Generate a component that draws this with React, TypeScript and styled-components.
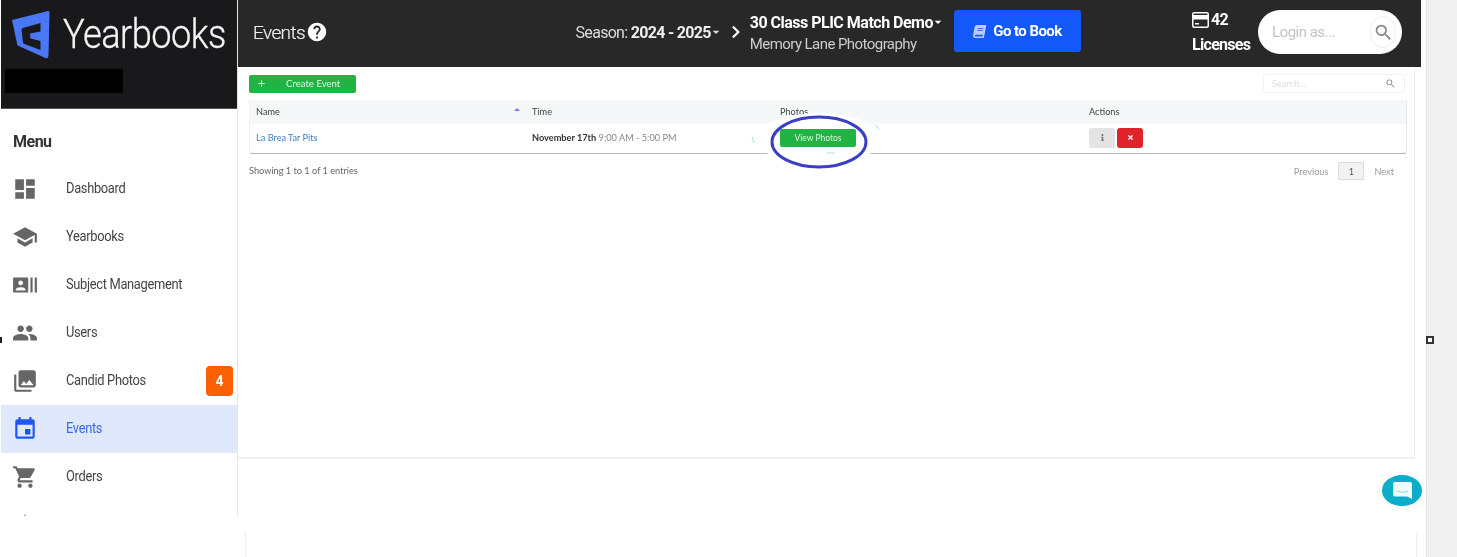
import React from "react";
import styled, { createGlobalStyle } from "styled-components";
import {
  MdDashboard,
  MdSchool,
  MdRecentActors,
  MdPeople,
  MdPhotoLibrary,
  MdEvent,
  MdShoppingCart,
  MdNavigation,
  MdHelp,
  MdSearch,
  MdArrowDropDown,
  MdAdd,
} from "react-icons/md";
import { FaBook, FaChevronRight, FaInfo, FaTimes } from "react-icons/fa";

const GlobalStyle = createGlobalStyle`
  html, body {
    margin: 0;
    padding: 0;
    background: #fff;
    overflow: hidden;
  }
  * {
    box-sizing: border-box;
  }
`;

// the last entry is cut off by the bottom of the sidebar, only its icon shows
const menu = [
  { label: "Dashboard", icon: MdDashboard },
  { label: "Yearbooks", icon: MdSchool },
  { label: "Subject Management", icon: MdRecentActors },
  { label: "Users", icon: MdPeople },
  { label: "Candid Photos", icon: MdPhotoLibrary, badge: 4 },
  { label: "Events", icon: MdEvent, active: true },
  { label: "Orders", icon: MdShoppingCart },
  { icon: MdNavigation },
];

const App = () => {
  return (
    <>
      <GlobalStyle />
      <Page>
        <Frame>
          <Sidebar>
            <Brand>
              <BrandRow>
                <Logo viewBox="0 0 40 50">
                  <path d="M2 10 L38 1 Q39.5 1 39.5 2.5 L38.5 46 Q38 49 35.5 48 L7.5 35.5 Z" fill="#4a78f5" />
                  <path d="M30.5 13 L13 18 Q11.5 18.5 11.5 20 L13 32 Q13 33.5 14.5 34 L30.5 40 L30.5 31 L20.5 28.5 L20 23.5 L30.5 21.5 Z" fill="#19191b" />
                </Logo>
                <BrandName>Yearbooks</BrandName>
              </BrandRow>
              <Redacted />
            </Brand>
            <MenuTitle>Menu</MenuTitle>
            <nav>
              {menu.map((item, i) => (
                <MenuRow key={i} $active={item.active}>
                  <MenuIcon $active={item.active}>
                    <item.icon size={26} />
                  </MenuIcon>
                  {item.label && <MenuLabel>{item.label}</MenuLabel>}
                  {item.badge && <Badge>{item.badge}</Badge>}
                </MenuRow>
              ))}
            </nav>
          </Sidebar>

          <Main>
            <TopBar>
              <PageTitle>
                Events
                <MdHelp size={22} color="#fff" />
              </PageTitle>
              <Season>
                Season: <b>2024 - 2025</b>
                <Caret />
              </Season>
              <Crumb>
                <FaChevronRight size={14} />
              </Crumb>
              <School>
                <SchoolName>
                  30 Class PLIC Match Demo
                  <Caret />
                </SchoolName>
                <SchoolOwner>Memory Lane Photography</SchoolOwner>
              </School>
              <BookButton>
                <BookIcon />
                Go to Book
              </BookButton>
              <Licenses>
                <span>
                  <svg width="17" height="16" viewBox="0 0 17 16">
                    <rect x="0.75" y="0.75" width="15.5" height="14.5" rx="1.5" fill="none" stroke="#fff" strokeWidth="1.5" />
                    <rect x="1" y="3" width="15" height="4.5" fill="#fff" />
                    <rect x="3" y="11" width="4" height="1.5" fill="#fff" />
                  </svg>
                  42
                </span>
                <span>Licenses</span>
              </Licenses>
              <LoginBox>
                Login as...
                <LoginSearch>
                  <MdSearch size={21} />
                </LoginSearch>
              </LoginBox>
            </TopBar>

            <Card>
              <Toolbar>
                <CreateButton>
                  <CreateIcon>
                    <MdAdd size={11} />
                  </CreateIcon>
                  <span>Create Event</span>
                </CreateButton>
                <SearchField>
                  Search...
                  <MdSearch size={11} color="#888" />
                </SearchField>
              </Toolbar>

              <Table>
                <HeadRow>
                  <span>
                    Name
                    <SortMark />
                  </span>
                  <span>Time</span>
                  <span>Photos</span>
                  <span>Actions</span>
                </HeadRow>
                <BodyRow>
                  <EventLink>La Brea Tar Pits</EventLink>
                  <span>
                    <b>November 17th</b> <Muted>9:00 AM - 5:00 PM</Muted>
                  </span>
                  <span>
                    <ViewButton>View Photos</ViewButton>
                  </span>
                  <Actions>
                    <IconButton $color="#e4e4e4" $ink="#777">
                      <FaInfo size={7} />
                    </IconButton>
                    <IconButton $color="#e0242c" $ink="#fff">
                      <FaTimes size={7} />
                    </IconButton>
                  </Actions>
                </BodyRow>
                <Marker viewBox="0 0 140 70">
                  <ellipse cx="70" cy="32" rx="62" ry="26" fill="#fff" />
                  <path d="M126 18 L130 22 M3 30 L5 36 M78 46 L86 46" stroke="#a8dcf2" strokeWidth="1" fill="none" />
                  <ellipse cx="70" cy="35" rx="47" ry="25" fill="none" stroke="#3a3fc4" strokeWidth="3" />
                </Marker>
              </Table>

              <Footer>
                <span>Showing 1 to 1 of 1 entries</span>
                <Pager>
                  <span>Previous</span>
                  <PageNumber>1</PageNumber>
                  <span>Next</span>
                </Pager>
              </Footer>
            </Card>

            <LowerPanel />
          </Main>
        </Frame>
        <RightStrip />
        <LeftTick />
        <Handle />
        <ChatBubble>
          <svg width="19" height="17" viewBox="0 0 19 17">
            <path d="M2 0 H17 Q19 0 19 2 V17 L14 14.5 H2 Q0 14.5 0 12.5 V2 Q0 0 2 0 Z" fill="#fff" opacity="0.95" />
            <path d="M4 9 Q9.5 12 15 9" stroke="#8fd7e4" strokeWidth="1" fill="none" />
          </svg>
        </ChatBubble>
      </Page>
    </>
  );
};

const Page = styled.div`
  position: relative;
  display: flex;
  width: 1457px;
  height: 557px;
  overflow: hidden;
  background: #fff;
  filter: blur(0.4px);
`;

const Frame = styled.div`
  display: flex;
  width: 1427px;
  padding-left: 1px;
  border-right: 1px solid #e4e4e4;
`;

const RightStrip = styled.div`
  flex: 1;
  background: #f1f1f1;
`;

const Sidebar = styled.aside`
  width: 237px;
  height: 516px;
  flex-shrink: 0;
  overflow: hidden;
  border-right: 1px solid #e6e6e6;
  font-family: "Roboto", "Liberation Sans", sans-serif;
`;

const Brand = styled.div`
  height: 109px;
  width: 237px;
  padding: 9px 0 0 4px;
  background: #19191b;
  border-bottom: 1px solid #555;
`;

const BrandRow = styled.div`
  display: flex;
  align-items: center;
  gap: 13px;
  height: 52px;
  padding-left: 5px;
`;

const Logo = styled.svg`
  width: 40px;
  height: 50px;
  flex-shrink: 0;
`;

const BrandName = styled.div`
  color: #f4f4f4;
  font-size: 40px;
  font-weight: 300;
  letter-spacing: -0.6px;
  line-height: 52px;
  -webkit-text-stroke: 0.3px #f4f4f4;
  transform: scaleX(0.905);
  transform-origin: left center;
`;

const Redacted = styled.div`
  width: 118px;
  height: 24px;
  margin-top: 8px;
  background: #000;
`;

const MenuTitle = styled.div`
  height: 56px;
  padding: 23px 0 0 12px;
  font-size: 16px;
  font-weight: 700;
  line-height: 20px;
  color: #333;
  letter-spacing: -0.5px;
`;

const MenuRow = styled.div<{ $active?: boolean }>`
  display: flex;
  align-items: center;
  height: 48px;
  padding-left: 11px;
  background: ${(p) => (p.$active ? "#e0e8fb" : "transparent")};
  color: ${(p) => (p.$active ? "#3d68f0" : "#444")};
`;

const MenuIcon = styled.div<{ $active?: boolean }>`
  display: flex;
  width: 26px;
  height: 26px;
  margin-right: 28px;
  color: ${(p) => (p.$active ? "#1f55f5" : "#666")};
`;

const MenuLabel = styled.span`
  margin-bottom: 2px;
  font-size: 14px;
  letter-spacing: -0.35px;
  transform: scaleX(0.92);
  transform-origin: left center;
`;

const Badge = styled.span`
  display: flex;
  align-items: center;
  justify-content: center;
  width: 27px;
  height: 30px;
  margin-left: auto;
  margin-right: 4px;
  border-radius: 4px;
  background: #fa5f00;
  color: #fff;
  font-size: 14px;
  font-weight: 700;
`;

const Main = styled.main`
  display: flex;
  flex-direction: column;
  width: 1188px;
`;

const TopBar = styled.header`
  display: flex;
  align-items: center;
  flex-shrink: 0;
  width: 1183px;
  height: 67px;
  padding: 0 19px 3px 15px;
  background: #282828;
  color: #fff;
  font-family: "Roboto", "Liberation Sans", sans-serif;
`;

const PageTitle = styled.div`
  display: flex;
  align-items: center;
  gap: 1px;
  font-size: 19px;
  font-weight: 300;
  letter-spacing: -0.6px;
  color: #eee;
  -webkit-text-stroke: 0.2px #eee;
`;

const Season = styled.div`
  display: flex;
  align-items: center;
  margin-left: auto;
  color: #ddd;
  font-size: 16px;
  letter-spacing: -0.7px;
  white-space: pre;
  b {
    font-weight: 700;
    color: #eee;
  }
`;

const Caret = styled(MdArrowDropDown).attrs({ size: 16 })`
  margin: 0 -4px 0 -3px;
  flex-shrink: 0;
`;

const Crumb = styled.div`
  display: flex;
  margin: 0 7px 0 9px;
  color: #fff;
`;

const School = styled.div`
  display: flex;
  flex-direction: column;
  gap: 3px;
  margin: 2px 12px 0 0;
`;

const SchoolName = styled.div`
  display: flex;
  align-items: center;
  font-size: 16px;
  font-weight: 700;
  line-height: 19px;
  letter-spacing: -0.5px;
`;

const SchoolOwner = styled.div`
  font-size: 15px;
  line-height: 19px;
  color: #ccc;
  letter-spacing: -0.56px;
`;

const BookButton = styled.div`
  display: flex;
  align-items: center;
  justify-content: center;
  gap: 7px;
  width: 127px;
  height: 42px;
  margin: 0 111px 2px 0;
  border-radius: 3px;
  background: #1358f8;
  font-size: 15px;
  font-weight: 700;
  letter-spacing: -0.55px;
`;

const BookIcon = styled(FaBook).attrs({ size: 13, color: "#b9ccff" })`
  transform: skewX(-10deg);
`;

const Licenses = styled.div`
  display: flex;
  flex-direction: column;
  gap: 5px;
  width: 58px;
  margin-right: 8px;
  font-size: 16px;
  font-weight: 700;
  line-height: 20px;
  letter-spacing: -0.7px;
  span {
    display: flex;
    align-items: center;
    gap: 2px;
    white-space: pre;
  }
`;

const LoginBox = styled.div`
  display: flex;
  align-items: center;
  justify-content: space-between;
  width: 144px;
  height: 44px;
  padding: 0 6px 0 14px;
  border-radius: 22px;
  background: #fff;
  color: #c4c4c4;
  font-size: 15px;
  letter-spacing: -0.5px;
`;

const LoginSearch = styled.span`
  display: flex;
  align-items: center;
  justify-content: center;
  width: 26px;
  height: 32px;
  border: 1px solid #f0f0f0;
  border-radius: 50%;
  color: #888;
`;

const Card = styled.section`
  flex-shrink: 0;
  width: 1177px;
  height: 392px;
  padding: 7px 8px 0 11px;
  border-right: 1px solid #eee;
  border-bottom: 2px solid #f0f0f0;
  font-family: "Lato", "Liberation Sans", sans-serif;
  font-size: 9.2px;
  color: #555;
`;

const Toolbar = styled.div`
  display: flex;
  align-items: center;
  justify-content: space-between;
  height: 19px;
  padding-right: 1px;
`;

const CreateButton = styled.div`
  display: flex;
  align-items: center;
  width: 107px;
  height: 18px;
  border-radius: 2px;
  background: #22b345;
  color: #e4f7e8;
  font-size: 9.6px;
`;

const CreateIcon = styled.span`
  display: flex;
  justify-content: center;
  width: 24px;
  margin-right: 13px;
  filter: blur(0.5px);
`;

const SearchField = styled.div`
  display: flex;
  align-items: center;
  justify-content: space-between;
  width: 142px;
  height: 19px;
  padding: 0 8px;
  border: 1px solid #f2f2f2;
  border-radius: 2px;
  color: #ddd;
`;

const Table = styled.div`
  position: relative;
  width: 1158px;
  margin-top: 7px;
  border-bottom: 1px solid #b5b5b5;
  border-right: 1px solid #e8e8e8;
  border-left: 1px solid #f2f2f2;
  border-radius: 0 0 3px 3px;
`;

const rowColumns = "276px 248px 309px 1fr";

const HeadRow = styled.div`
  display: grid;
  grid-template-columns: ${rowColumns};
  align-items: center;
  height: 24px;
  padding: 0 0 2px 6px;
  background: #f6f7f9;
  color: #444;
  span {
    position: relative;
    filter: blur(0.7px);
  }
`;

const SortMark = styled.i`
  position: absolute;
  top: 2px;
  right: 12px;
  width: 0;
  height: 0;
  border: 3px solid transparent;
  border-top: 0;
  border-bottom: 3px solid #7c7cf0;
`;

const BodyRow = styled.div`
  position: relative;
  z-index: 2;
  display: grid;
  grid-template-columns: ${rowColumns};
  align-items: center;
  height: 29px;
  padding: 0 0 2px 6px;
  color: #333;
  > span {
    filter: blur(0.6px);
  }
`;

const EventLink = styled.span`
  color: #3f7fc0;
`;

const Muted = styled.span`
  color: #888;
`;

const ViewButton = styled.div`
  display: flex;
  align-items: center;
  justify-content: center;
  width: 76px;
  height: 18px;
  border-radius: 2px;
  background: #22b345;
  color: #dcf5e2;
  font-size: 8.5px;
`;

const Actions = styled.div`
  display: flex;
  gap: 2px;
`;

const IconButton = styled.span<{ $color: string; $ink: string }>`
  display: flex;
  align-items: center;
  justify-content: center;
  width: 26px;
  height: 20px;
  border-radius: 3px;
  background: ${(p) => p.$color};
  color: ${(p) => p.$ink};
`;

const Marker = styled.svg`
  position: absolute;
  left: 499px;
  top: 7px;
  width: 140px;
  height: 70px;
  z-index: 1;
`;

const Footer = styled.div`
  display: flex;
  align-items: center;
  justify-content: space-between;
  height: 18px;
  margin-top: 8px;
  padding-right: 12px;
  color: #666;
  > span {
    margin-bottom: 2px;
    filter: blur(0.6px);
  }
`;

const Pager = styled.div`
  display: flex;
  align-items: center;
  gap: 10px;
  color: #999;
  filter: blur(0.6px);
`;

const PageNumber = styled.span`
  display: flex;
  align-items: center;
  justify-content: center;
  width: 26px;
  height: 18px;
  border: 1px solid #ddd;
  background: #f2f2f2;
  color: #555;
`;

const LowerPanel = styled.div`
  flex: 1;
  width: 1172px;
  margin: 74px 0 0 7px;
  border-left: 1px solid #eee;
  border-right: 1px solid #eee;
`;

const LeftTick = styled.i`
  position: absolute;
  left: 0;
  top: 337px;
  width: 2px;
  height: 6px;
  background: #222;
`;

const Handle = styled.i`
  position: absolute;
  left: 1426px;
  top: 336px;
  width: 8px;
  height: 8px;
  border: 2px solid #333;
  background: #fff;
`;

const ChatBubble = styled.div`
  position: absolute;
  left: 1382px;
  top: 475px;
  display: flex;
  align-items: center;
  justify-content: center;
  width: 40px;
  height: 31px;
  border-radius: 50%;
  background: #0aaec8;
  box-shadow: 0 1px 8px rgba(0, 0, 0, 0.06);
`;

export default App;
